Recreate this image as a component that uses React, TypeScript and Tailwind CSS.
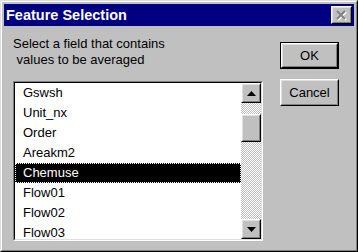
import React from "react"

const fields = ["Gswsh", "Unit_nx", "Order", "Areakm2", "Chemuse", "Flow01", "Flow02", "Flow03"]
const selected = "Chemuse"

function Raised({ className = "", children }: { className?: string; children?: React.ReactNode }) {
  return (
    <div className={`border border-t-white border-l-white border-b-black border-r-black ${className}`}>
      <div className="w-full h-full flex items-center justify-center border border-t-[#dfdfdf] border-l-[#dfdfdf] border-b-[#808080] border-r-[#808080] bg-[#c0c0c0]">
        {children}
      </div>
    </div>
  )
}

function Arrow({ down = false }: { down?: boolean }) {
  return (
    <svg width="9" height="5" viewBox="0 0 9 5" className={down ? "rotate-180" : ""}>
      <path d="M4.5 0 L9 5 L0 5 Z" fill="#000" />
    </svg>
  )
}

export default function App() {
  return (
    <div className="w-[358px] h-[252px] font-['Liberation_Sans',Arial,sans-serif] text-black border border-t-[#dfdfdf] border-l-[#dfdfdf] border-b-black border-r-black">
      <div className="w-full h-full flex flex-col p-[2px] bg-[#c0c0c0] border border-t-white border-l-white border-b-[#808080] border-r-[#808080]">
        {/* title bar */}
        <div className="h-[22px] shrink-0 flex items-center justify-between bg-[#000080] pl-[2px] pr-[2px]">
          <span className="text-[14.5px] leading-[16px] font-bold text-white">Feature Selection</span>
          <Raised className="w-[21px] h-[18px]">
            <svg width="12" height="11" viewBox="0 0 12 11">
              <path d="M2 2 L10 10 M10 2 L2 10" stroke="#fff" strokeWidth="2" />
              <path d="M1 1 L9 9 M9 1 L1 9" stroke="#808080" strokeWidth="2" />
            </svg>
          </Raised>
        </div>

        {/* body */}
        <div className="flex flex-1 text-[13px]">
          <div className="flex flex-col pl-[9px] pt-[10px]">
            <div className="leading-[16px] whitespace-pre">
              <div>Select a field that contains</div>
              <div> values to be averaged</div>
            </div>
            <div className="mt-[13px] w-[250px] h-[160px] border border-t-[#808080] border-l-[#808080] border-b-white border-r-white">
              <div className="w-full h-full flex border border-t-black border-l-black border-b-[#dfdfdf] border-r-[#dfdfdf]">
                <div className="flex-1 bg-white overflow-hidden">
                  {fields.map((f) =>
                    f === selected ? (
                      <div key={f} className="h-[20px] bg-black">
                        <div className="h-full flex items-center pl-[7px] text-white border border-dotted border-white">{f}</div>
                      </div>
                    ) : (
                      <div key={f} className="h-[20px] flex items-center pl-[8px]">{f}</div>
                    )
                  )}
                </div>
                <div className="w-[20px] flex flex-col bg-[repeating-conic-gradient(#c0c0c0_0_25%,#fff_0_50%)] bg-[length:2px_2px]">
                  <Raised className="w-[20px] h-[20px]">
                    <Arrow />
                  </Raised>
                  <Raised className="w-[20px] h-[28px] mt-[11px]" />
                  <div className="flex-1" />
                  <Raised className="w-[20px] h-[20px]">
                    <Arrow down />
                  </Raised>
                </div>
              </div>
            </div>
          </div>

          <div className="ml-[17px] pt-[16px] flex flex-col gap-[10px]">
            <div className="w-[59px] h-[27px] border border-black">
              <div className="w-full h-full border border-t-white border-l-white border-b-black border-r-black">
                <div className="w-full h-full flex items-center justify-center border border-t-[#dfdfdf] border-l-[#dfdfdf] border-b-[#808080] border-r-[#808080]">
                  OK
                </div>
              </div>
            </div>
            <Raised className="w-[59px] h-[27px]">Cancel</Raised>
          </div>
        </div>
      </div>
    </div>
  )
}
